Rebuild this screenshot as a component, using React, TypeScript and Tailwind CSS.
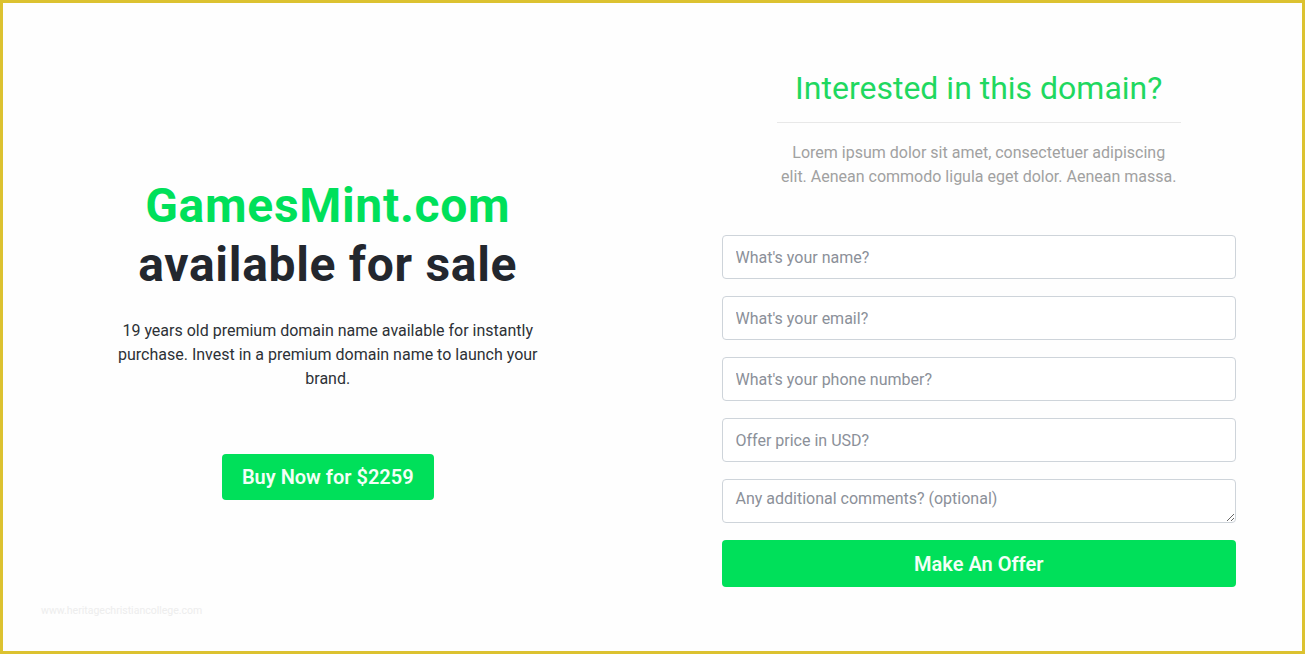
const font = {fontFamily: 'Roboto, "Liberation Sans", sans-serif'};

const fields = ["What's your name?", "What's your email?", "What's your phone number?", 'Offer price in USD?'];

const App = () => {
  return (
    <div
      className="h-[654px] w-full border-[3px] border-[#dcc230] bg-[#fefefe] text-[#222831]"
      style={font}
    >
      <div className="grid h-full grid-cols-2">
        {/* left: domain pitch */}
        <div className="relative flex flex-col items-center pt-[173px] text-center">
          <h1 className="text-[48px] font-bold leading-[59px] tracking-[0.7px]">
            <span className="text-[#00e05a]">GamesMint.com</span>
            <br />
            <span className="text-[#23272e]">available for sale</span>
          </h1>
          <p className="mt-[25px] w-[440px] text-[16px] leading-[24px] text-[#2d3136]">
            19 years old premium domain name available for instantly purchase. Invest in a premium domain name to
            launch your brand.
          </p>
          <button className="mt-[63px] h-[46px] rounded-[4px] bg-[#00e05a] px-[20px] text-[20px] font-semibold text-[#f3fff7]">
            Buy Now for $2259
          </button>
          <span className="absolute bottom-[32px] left-[38px] text-[10.5px] text-[#ededed]">
            www.heritagechristiancollege.com
          </span>
        </div>

        {/* right: offer form */}
        <div className="flex flex-col items-center pl-[69px] pr-[66px] pt-[65px]">
          <h2 className="text-[32px] leading-[40px] text-[#1fd860]">Interested in this domain?</h2>
          <div className="mt-[14px] h-px w-[404px] bg-[#e8e8e8]" />
          <p className="mt-[18px] w-[400px] text-center text-[16px] leading-[23.5px] text-[#a1a1a1]">
            Lorem ipsum dolor sit amet, consectetuer adipiscing elit. Aenean commodo ligula eget dolor. Aenean massa.
          </p>
          <form className="mt-[47px] flex w-full flex-col gap-[17px]">
            {fields.map(f => (
              <input
                key={f}
                placeholder={f}
                className="h-[44px] w-full rounded-[4px] border border-[#ced4da] bg-white px-[13px] text-[16px] placeholder:text-[#8b9099]"
              />
            ))}
            <textarea
              placeholder="Any additional comments? (optional)"
              className="h-[44px] w-full rounded-[4px] border border-[#ced4da] bg-white px-[13px] py-[7px] text-[16px] leading-[24px] placeholder:text-[#8b9099]"
            />
            <button
              type="button"
              className="h-[47px] w-full rounded-[4px] bg-[#00e05a] text-[20px] font-semibold text-[#f3fff7]"
            >
              Make An Offer
            </button>
          </form>
        </div>
      </div>
    </div>
  );
};

export default App;
